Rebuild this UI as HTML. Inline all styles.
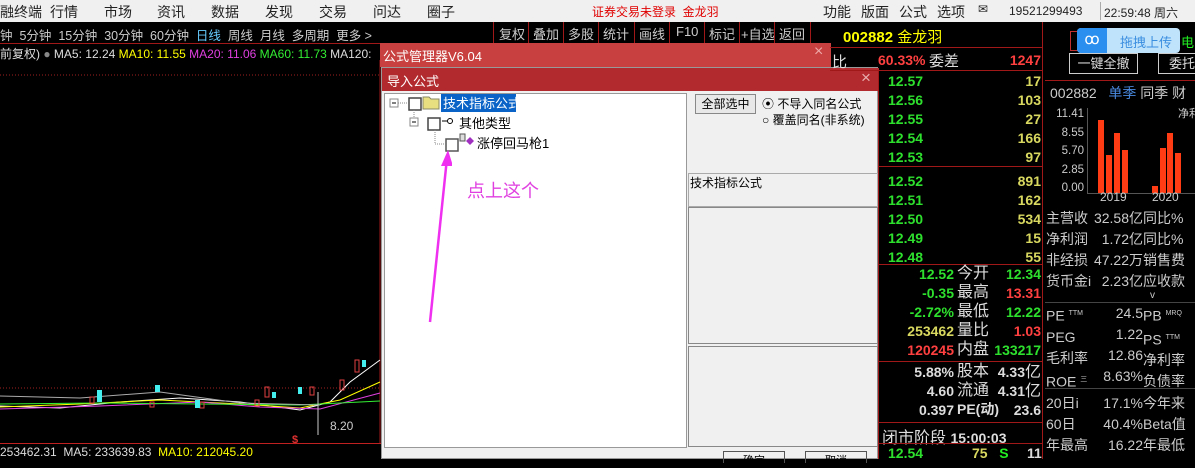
<!DOCTYPE html>
<html><head><meta charset="utf-8"><style>
*{margin:0;padding:0;box-sizing:border-box}
body{width:1195px;height:459px;overflow:hidden;background:#000;position:relative;font-family:"Liberation Sans","Noto Sans CJK SC",sans-serif;font-size:13px}
.a{position:absolute;white-space:nowrap}
.top{left:0;top:0;width:1195px;height:22px;background:#f0f0f0;color:#222;font-size:14px}
.g{color:#2ee02e;font-weight:bold;font-size:14px}
.y{color:#d8d860;font-weight:bold;font-size:14px}
.r{color:#ff4040;font-weight:bold;font-size:14px}
.w{color:#ddd;font-size:15px}
.rn{text-align:right;width:80px}
.hl{position:absolute;height:1px;background:#a01818}
.fr{color:#ccc;font-size:13px}
</style></head><body>
<div class="a top">
<span class="a" style="left:0;top:2px">融终端</span><span class="a" style="left:50px;top:2px">行情</span><span class="a" style="left:104px;top:2px">市场</span><span class="a" style="left:157px;top:2px">资讯</span><span class="a" style="left:211px;top:2px">数据</span><span class="a" style="left:265px;top:2px">发现</span><span class="a" style="left:319px;top:2px">交易</span><span class="a" style="left:373px;top:2px">问达</span><span class="a" style="left:427px;top:2px">圈子</span>
<span class="a" style="left:592px;top:3px;color:#e00000;font-size:12px">证券交易未登录&nbsp; 金龙羽</span>
<span class="a" style="left:823px;top:2px">功能</span><span class="a" style="left:861px;top:2px">版面</span><span class="a" style="left:899px;top:2px">公式</span><span class="a" style="left:937px;top:2px">选项</span>
<span class="a" style="left:978px;top:2px;font-size:12px">✉</span>
<span class="a" style="left:1009px;top:4px;font-size:12px">19521299493</span>
<div class="a" style="left:1100px;top:2px;width:1px;height:18px;background:#aaa"></div>
<span class="a" style="left:1104px;top:4px;font-size:12px">22:59:48 周六</span>
</div>
<!-- toolbar -->
<div class="a" style="left:0;top:22px;width:1045px;height:21px;background:#000;color:#ccc;font-size:12.5px">
<span class="a" style="left:0;top:3px">钟&nbsp; 5分钟&nbsp; 15分钟&nbsp; 30分钟&nbsp; 60分钟&nbsp; <span style="color:#6cf">日线</span>&nbsp; 周线&nbsp; 月线&nbsp; 多周期&nbsp; 更多 &gt;</span>
</div>
<div class="a" style="left:493px;top:22px;height:21px;width:317px;border-left:1px solid #a01818;color:#ccc;font-size:13px">
<span class="a" style="left:5px;top:2px">复权</span><span class="a" style="left:39px;top:2px">叠加</span><span class="a" style="left:74px;top:2px">多股</span><span class="a" style="left:109px;top:2px">统计</span><span class="a" style="left:145px;top:2px">画线</span><span class="a" style="left:182px;top:2px">F10</span><span class="a" style="left:215px;top:2px">标记</span><span class="a" style="left:247px;top:2px">+自选</span><span class="a" style="left:285px;top:2px">返回</span>
<div class="a" style="left:34px;top:0;width:1px;height:21px;background:#a01818"></div><div class="a" style="left:69px;top:0;width:1px;height:21px;background:#a01818"></div><div class="a" style="left:104px;top:0;width:1px;height:21px;background:#a01818"></div><div class="a" style="left:140px;top:0;width:1px;height:21px;background:#a01818"></div><div class="a" style="left:175px;top:0;width:1px;height:21px;background:#a01818"></div><div class="a" style="left:210px;top:0;width:1px;height:21px;background:#a01818"></div><div class="a" style="left:245px;top:0;width:1px;height:21px;background:#a01818"></div><div class="a" style="left:280px;top:0;width:1px;height:21px;background:#a01818"></div><div class="a" style="left:316px;top:0;width:1px;height:21px;background:#a01818"></div>
</div>
<div class="hl" style="left:0;top:43px;width:380px"></div>
<!-- MA line -->
<div class="a" style="left:0;top:45px;font-size:12px;color:#ddd">前复权) <span style="color:#888">●</span> MA5: 12.24 <span style="color:#ff0">MA10: 11.55</span> <span style="color:#e040e0">MA20: 11.06</span> <span style="color:#3e3">MA60: 11.73</span> MA120:</div>
<!-- chart -->
<svg class="a" style="left:0;top:60px" width="382" height="385">
<line x1="0" y1="15" x2="380" y2="15" stroke="#a02020" stroke-dasharray="1,2"/>
<line x1="0" y1="328" x2="380" y2="328" stroke="#a02020" stroke-dasharray="1,2"/>
<line x1="380" y1="0" x2="380" y2="383" stroke="#a01818"/>
<polyline points="0,346 60,348 120,342 180,338 240,342 300,350 330,342 350,322 380,300" fill="none" stroke="#fff"/>
<polyline points="0,347 80,344 160,340 240,344 300,348 340,340 380,322" fill="none" stroke="#ff0"/>
<polyline points="0,349 100,346 200,342 260,347 320,349 380,333" fill="none" stroke="#e040e0"/>
<polyline points="0,344 100,343 200,344 300,345 380,341" fill="none" stroke="#3e3"/>
<polyline points="0,336 80,338 160,332 240,343 320,345" fill="none" stroke="#aaa"/>
<g fill="none" stroke="#e04040"><rect x="90" y="337" width="4" height="6"/><rect x="150" y="342" width="4" height="5"/><rect x="200" y="342" width="4" height="6"/><rect x="255" y="340" width="4" height="6"/><rect x="265" y="327" width="4" height="10"/><rect x="310" y="327" width="4" height="8"/><rect x="340" y="320" width="4" height="10"/><rect x="355" y="300" width="4" height="12"/></g>
<g fill="#4ee"><rect x="97" y="330" width="5" height="12"/><rect x="155" y="325" width="5" height="7"/><rect x="195" y="340" width="5" height="8"/><rect x="272" y="332" width="4" height="6"/><rect x="298" y="327" width="4" height="7"/><rect x="362" y="300" width="4" height="7"/></g>
<line x1="318" y1="332" x2="318" y2="375" stroke="#ccc"/>
<text x="330" y="370" fill="#ccc" font-size="12">8.20</text>
<text x="292" y="383" fill="#e03030" font-size="11" font-weight="bold">$</text>
</svg>
<div class="hl" style="left:0;top:443px;width:382px;background:#c02020"></div>
<div class="a" style="left:0;top:445px;font-size:12px;color:#ddd">253462.31&nbsp; MA5: 233639.83&nbsp; <span style="color:#ff0">MA10: 212045.20</span></div>
<!-- outer dialog -->
<div class="a" style="left:380px;top:43px;width:451px;height:24px;background:#c8403f;color:#fff;font-size:13px"><span class="a" style="left:3px;top:3px">公式管理器V6.04</span><span class="a" style="left:434px;top:0;font-size:16px;color:#eaa">×</span></div>
<!-- inner dialog -->
<div class="a" style="left:381px;top:67px;width:497px;height:392px;background:#f0f0f0;border:1px solid #999">
<div class="a" style="left:0;top:0;width:497px;height:23px;background:#b32a2e;color:#fff"><span class="a" style="left:5px;top:3px">导入公式</span><span class="a" style="left:479px;top:0;font-size:17px;color:#e8b0b0">×</span></div>
<div class="a" style="left:2px;top:25px;width:303px;height:355px;background:#fff;border:1px solid #999"></div>
<svg class="a" style="left:3px;top:26px" width="300" height="240">
<rect x="5" y="5" width="8" height="8" fill="#fff" stroke="#888"/><line x1="7" y1="9" x2="11" y2="9" stroke="#000"/>
<line x1="13" y1="9" x2="23" y2="9" stroke="#888" stroke-dasharray="1,1"/>
<rect x="24" y="4" width="12" height="12" fill="#fff" stroke="#444" stroke-width="1.5"/>
<path d="M38 3h6l2 2h8v10h-16z" fill="#e8e080" stroke="#886"/>
<rect x="56" y="0" width="75" height="18" fill="#0a64c8"/>
<text x="58" y="14" fill="#fff" font-size="13">技术指标公式</text>
<line x1="29" y1="16" x2="29" y2="28" stroke="#888" stroke-dasharray="1,1"/>
<rect x="25" y="24" width="8" height="8" fill="#fff" stroke="#888"/><line x1="27" y1="28" x2="31" y2="28" stroke="#000"/>
<rect x="43" y="24" width="12" height="12" fill="#fff" stroke="#444" stroke-width="1.5"/>
<path d="M57 27h5" stroke="#000"/><circle cx="65" cy="27" r="2.5" fill="none" stroke="#000"/>
<text x="74" y="34" fill="#000" font-size="13">其他类型</text>
<line x1="50" y1="36" x2="50" y2="50" stroke="#888" stroke-dasharray="1,1"/><line x1="50" y1="50" x2="60" y2="50" stroke="#888" stroke-dasharray="1,1"/>
<rect x="61" y="45" width="12" height="12" fill="#fff" stroke="#555" stroke-width="1.5"/>
<rect x="75" y="40" width="5" height="7" fill="#ddd" stroke="#555"/>
<path d="M81 47l4-4 4 4-4 4z" fill="#a030c0"/>
<text x="92" y="54" fill="#000" font-size="13">涨停回马枪1</text>
</svg>
<svg class="a" style="left:40px;top:80px" width="30" height="180"><line x1="8" y1="174" x2="25" y2="10" stroke="#f030f0" stroke-width="2.5"/><path d="M26 2l-7 16h12z" fill="#f030f0"/></svg>
<span class="a" style="left:85px;top:109px;color:#e040e0;font-size:18px">点上这个</span>
<div class="a" style="left:313px;top:26px;width:61px;height:20px;border:1px solid #888;background:#e8e8e8;font-size:12px;text-align:center;line-height:18px">全部选中</div>
<span class="a" style="left:380px;top:27px;font-size:12px">⦿ 不导入同名公式</span>
<span class="a" style="left:380px;top:43px;font-size:12px">○ 覆盖同名(非系统)</span>
<div class="a" style="left:306px;top:105px;width:190px;height:34px;border:1px solid #aaa;font-size:12px;padding-left:1px">技术指标公式</div>
<div class="a" style="left:306px;top:139px;width:190px;height:137px;border:1px solid #888;background:#f0f0f0"></div>
<div class="a" style="left:306px;top:278px;width:190px;height:101px;border:1px solid #888;background:#f0f0f0"></div>
<div class="a" style="left:341px;top:383px;width:62px;height:12px;border:1px solid #555;border-bottom:none;font-size:11px;text-align:center">确定</div>
<div class="a" style="left:423px;top:383px;width:62px;height:12px;border:1px solid #555;border-bottom:none;font-size:11px;text-align:center">取消</div>
</div>
<!-- quote panel -->
<div class="a" style="left:1042px;top:22px;width:1px;height:437px;background:#a01818"></div>
<span class="a" style="left:843px;top:26px;color:#ff0;font-size:15px"><b>002882</b> 金龙羽</span>
<div class="hl" style="left:830px;top:47px;width:213px"></div>
<span class="a w" style="left:832px;top:51px">比</span>
<span class="a r" style="left:878px;top:52px">60.33%</span><span class="a w" style="left:929px;top:50px">委差</span>
<span class="a r rn" style="left:961px;top:52px">1247</span>
<div class="hl" style="left:830px;top:70px;width:213px"></div>
<div class="a" style="left:878px;top:70px;width:1px;height:389px;background:#a01818"></div>
<div class="a" style="left:888px;top:72px;line-height:19px">
<div class="g">12.57</div><div class="g">12.56</div><div class="g">12.55</div><div class="g">12.54</div><div class="g">12.53</div>
<div style="height:5px"></div>
<div class="g">12.52</div><div class="g">12.51</div><div class="g">12.50</div><div class="g">12.49</div><div class="g">12.48</div></div>
<div class="a" style="left:961px;top:72px;line-height:19px;width:80px;text-align:right">
<div class="y">17</div><div class="y">103</div><div class="y">27</div><div class="y">166</div><div class="y">97</div>
<div style="height:5px"></div>
<div class="y">891</div><div class="y">162</div><div class="y">534</div><div class="y">15</div><div class="y">55</div></div>
<div class="hl" style="left:878px;top:166px;width:165px"></div>
<div class="hl" style="left:878px;top:264px;width:165px"></div>
<div class="a" style="left:878px;top:265px;width:76px;text-align:right;line-height:19px">
<div class="g">12.52</div><div class="g">-0.35</div><div class="g">-2.72%</div><div class="y">253462</div><div class="r">120245</div>
<div style="height:3px"></div>
<div style="color:#ddd;font-weight:bold;font-size:14px">5.88%</div><div style="color:#ddd;font-weight:bold;font-size:14px">4.60</div><div style="color:#ddd;font-weight:bold;font-size:14px">0.397</div></div>
<div class="a w" style="left:957px;top:264px;line-height:19px;font-size:16px">今开<br>最高<br>最低<br>量比<br>内盘<div style="height:3px"></div>股本<br>流通<br><span style="font-size:14px;font-weight:bold">PE(动)</span></div>
<div class="a" style="left:961px;top:265px;width:80px;text-align:right;line-height:19px">
<div class="g">12.34</div><div class="r">13.31</div><div class="g">12.22</div><div class="r">1.03</div><div class="g">133217</div>
<div style="height:3px"></div>
<div style="color:#ddd;font-weight:bold;font-size:14px">4.33<span style="font-weight:normal;font-size:16px">亿</span></div><div style="color:#ddd;font-weight:bold;font-size:14px">4.31<span style="font-weight:normal;font-size:16px">亿</span></div><div style="color:#ddd;font-weight:bold;font-size:14px">23.6</div></div>
<div class="hl" style="left:878px;top:361px;width:165px"></div>
<div class="hl" style="left:878px;top:422px;width:165px"></div>
<span class="a w" style="left:882px;top:424px;font-size:16px">闭市阶段 <b style="font-size:14px">15:00:03</b></span>
<div class="hl" style="left:878px;top:443px;width:165px"></div>
<span class="a g" style="left:888px;top:445px">12.54</span><span class="a y" style="left:972px;top:445px">75&nbsp;&nbsp; <span style="color:#2e2">S</span></span><span class="a" style="left:1027px;top:445px;color:#ddd;font-weight:bold;font-size:14px">11</span>
<!-- far right -->
<div class="a" style="left:1070px;top:31px;width:50px;height:20px;border:1px solid #c03030"></div>
<div class="a" style="left:1077px;top:28px;width:103px;height:25px;background:#bfe3fb;border-radius:4px"></div>
<div class="a" style="left:1077px;top:28px;width:30px;height:25px;background:#2b8ff0;border-radius:4px 0 0 4px;color:#fff;font-size:15px;text-align:center;line-height:24px">ꝏ</div>
<span class="a" style="left:1120px;top:32px;color:#3a8ee0;font-size:13px">拖拽上传</span>
<span class="a" style="left:1181px;top:32px;color:#2e2;font-size:13px">电</span>
<div class="a" style="left:1069px;top:53px;width:69px;height:21px;border:1px solid #ccc;color:#ddd;font-size:13px;text-align:center;line-height:19px">一键全撤</div>
<div class="a" style="left:1158px;top:53px;width:40px;height:21px;border:1px solid #ccc;color:#ddd;font-size:13px;padding-left:10px;line-height:19px">委托</div>
<div class="hl" style="left:1045px;top:80px;width:150px"></div>
<span class="a fr" style="left:1050px;top:83px;font-size:14px">002882&nbsp;&nbsp; <span style="color:#4a8ae0">单季</span> 同季 财</span>
<div class="a fr" style="left:1054px;top:105px;font-size:11.5px;line-height:18.5px;text-align:right;width:30px">11.41<br>8.55<br>5.70<br>2.85<br>0.00</div>
<span class="a fr" style="left:1178px;top:105px;font-size:11px">净利</span>
<div class="a" style="left:1087px;top:108px;width:1px;height:86px;background:#555"></div>
<div class="a" style="left:1087px;top:193px;width:108px;height:1px;background:#555"></div>
<div class="a" style="left:1098px;top:120px;width:6px;height:73px;background:#ff3c14"></div>
<div class="a" style="left:1106px;top:155px;width:6px;height:38px;background:#ff3c14"></div>
<div class="a" style="left:1114px;top:133px;width:6px;height:60px;background:#ff3c14"></div>
<div class="a" style="left:1122px;top:150px;width:6px;height:43px;background:#ff3c14"></div>
<div class="a" style="left:1152px;top:186px;width:6px;height:7px;background:#ff3c14"></div>
<div class="a" style="left:1160px;top:148px;width:6px;height:45px;background:#ff3c14"></div>
<div class="a" style="left:1167px;top:133px;width:6px;height:60px;background:#ff3c14"></div>
<div class="a" style="left:1175px;top:153px;width:6px;height:40px;background:#ff3c14"></div>
<span class="a fr" style="left:1100px;top:190px;font-size:12px">2019</span><span class="a fr" style="left:1152px;top:190px;font-size:12px">2020</span>
<div class="a fr" style="left:1046px;top:208px;line-height:21px;font-size:14px">主营收<br>净利润<br>非经损<br>货币金i</div>
<div class="a fr" style="left:1085px;top:208px;line-height:21px;font-size:14px;width:58px;text-align:right">32.58亿<br>1.72亿<br>47.22万<br>2.23亿</div>
<div class="a fr" style="left:1143px;top:208px;line-height:21px;font-size:14px">同比%<br>同比%<br>销售费<br>应收款</div>
<span class="a fr" style="left:1150px;top:290px;font-size:10px">v</span>
<div class="a" style="left:1045px;top:302px;width:150px;height:1px;background:#444"></div>
<div class="a fr" style="left:1046px;top:303px;line-height:21px;font-size:14px">PE <sup style="font-size:7px">TTM</sup><br>PEG<br>毛利率<br>ROE <sup style="font-size:7px">三</sup></div>
<div class="a fr" style="left:1085px;top:303px;line-height:21px;font-size:14px;width:58px;text-align:right">24.5<br>1.22<br>12.86<br>8.63%</div>
<div class="a fr" style="left:1143px;top:303px;line-height:21px;font-size:14px">PB <sup style="font-size:7px">MRQ</sup><br>PS <sup style="font-size:7px">TTM</sup><br>净利率<br>负债率</div>
<div class="a" style="left:1045px;top:388px;width:150px;height:1px;background:#444"></div>
<div class="a fr" style="left:1046px;top:393px;line-height:21px;font-size:14px">20日i<br>60日<br>年最高</div>
<div class="a fr" style="left:1085px;top:393px;line-height:21px;font-size:14px;width:58px;text-align:right">17.1%<br>40.4%<br>16.22</div>
<div class="a fr" style="left:1143px;top:393px;line-height:21px;font-size:14px">今年来<br>Beta值<br>年最低</div>
</body></html>
